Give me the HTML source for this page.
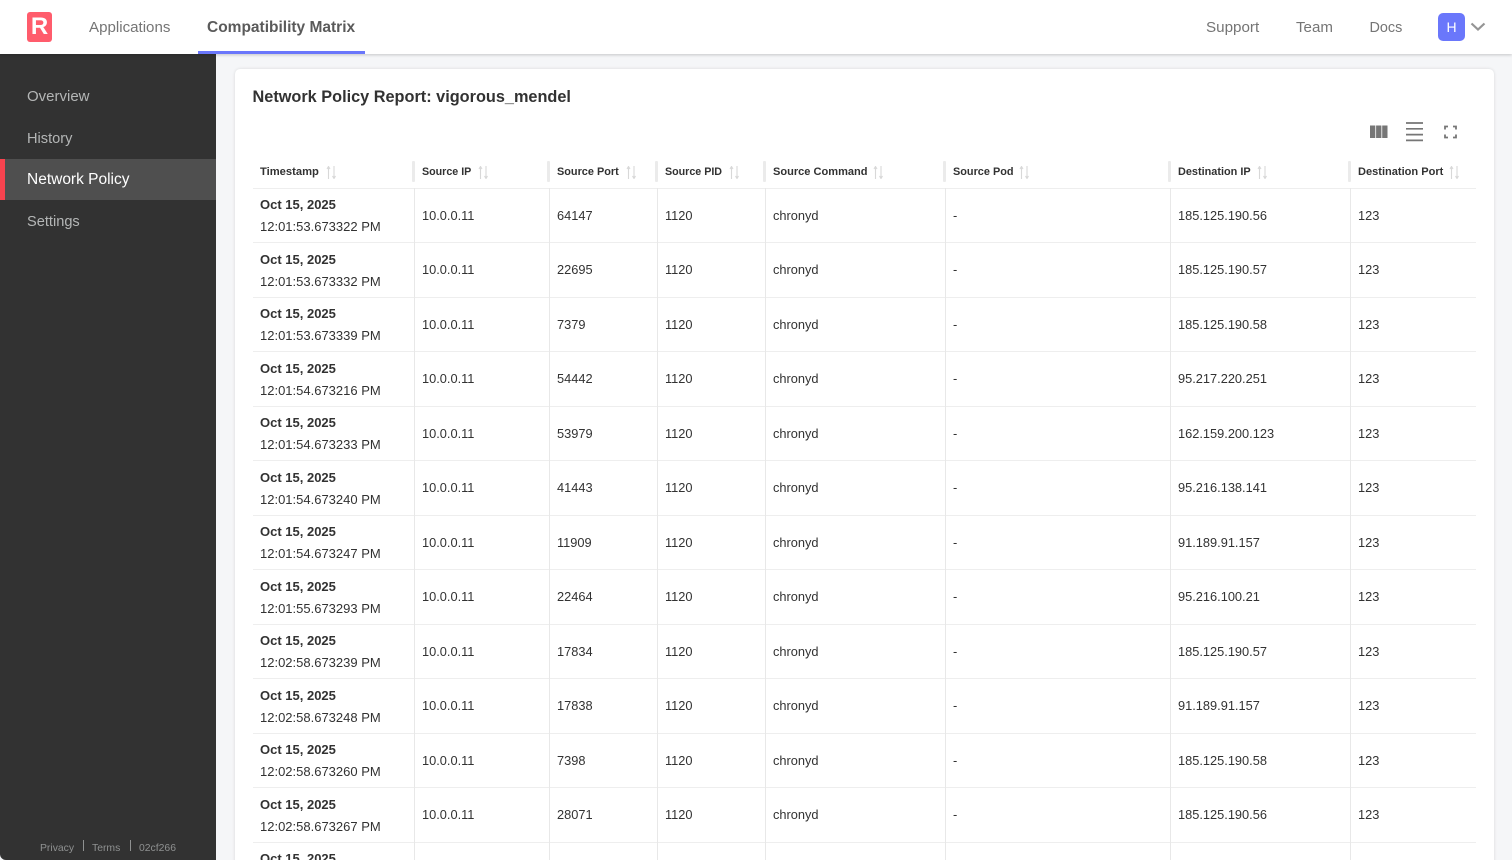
<!DOCTYPE html>
<html><head><meta charset="utf-8"><style>
*{box-sizing:border-box}
html,body{margin:0;padding:0;width:1512px;height:860px;overflow:hidden;background:#f5f6f8;font-family:"Liberation Sans",sans-serif;position:relative}
.a{position:absolute;white-space:nowrap}
.nav{font-size:15.1px;color:#757575;top:18px;line-height:20px}
.side{font-size:14.8px;color:#b4b6b6;left:27px;line-height:20px}
.foot{font-size:10.4px;color:#8f9191;top:842px;line-height:13px}
.h{font-size:11.05px;font-weight:bold;color:#323232;top:166px;line-height:13px}
.r{position:absolute;left:253px;width:1223px;height:54.5px;border-bottom:1px solid #eeeeee;font-size:12.8px;color:#323232}
.r span{position:absolute;top:19px;line-height:15px;white-space:nowrap}
.r b{position:absolute;left:7px;top:8.5px;line-height:16px;font-size:13px;color:#323232}
.r i{position:absolute;left:7px;top:30.5px;line-height:16px;font-size:13px;font-style:normal;color:#323232}
.c1{left:169px}.c2{left:304px}.c3{left:412px}.c4{left:520px}.c5{left:700px}.c6{left:925px}.c7{left:1105px}
.v{position:absolute;top:188px;height:672px;width:1.5px;background:#e8e8e8}
.g{position:absolute;top:160.5px;height:21.5px;width:3px;background:#ebebeb;border-radius:1px}
svg{position:absolute;display:block}
</style></head><body>
<div class="a" style="left:216px;top:54px;width:1296px;height:806px;background:#f5f6f8"></div>
<div class="a" style="left:235px;top:69px;width:1259px;height:800px;background:#fff;border-radius:5px;box-shadow:0 0 3px rgba(0,0,0,.12)"></div>

<div class="a" style="left:0;top:54px;width:216px;height:806px;background:#323232;border-bottom-left-radius:6px"></div>
<div class="a" style="left:0;top:158.5px;width:216px;height:41.5px;background:#4f4f4f"></div>
<div class="a" style="left:0;top:158.5px;width:5px;height:41.5px;background:#f7434f"></div>
<div class="a side" style="top:87px;font-size:15px">Overview</div>
<div class="a side" style="top:129px;font-size:14.6px">History</div>
<div class="a side" style="top:170px;color:#fff;font-size:15.5px">Network Policy</div>
<div class="a side" style="top:212px;font-size:14.6px">Settings</div>
<div class="a foot" style="left:40px">Privacy</div>
<div class="a" style="left:83px;top:840px;width:1px;height:11px;background:#8f9191"></div>
<div class="a foot" style="left:92px">Terms</div>
<div class="a" style="left:130px;top:840px;width:1px;height:11px;background:#8f9191"></div>
<div class="a foot" style="left:139px">02cf266</div>

<div class="a" style="left:0;top:0;width:1512px;height:54px;background:#fff;box-shadow:0 1px 3px rgba(0,0,0,.2)"></div>
<div class="a" style="left:27px;top:12px;width:25px;height:30px;background:#ff5c6c;border-radius:3px"></div>
<div class="a" style="left:27px;top:12px;width:25px;line-height:30px;text-align:center;color:#fff;font-size:24px;font-weight:bold">R</div>
<div class="a nav" style="left:89px">Applications</div>
<div class="a nav" style="left:207px;font-weight:bold;color:#5a5a5a;font-size:15.5px">Compatibility Matrix</div>
<div class="a" style="left:198px;top:51px;width:167px;height:3px;background:#6a77fb"></div>
<div class="a nav" style="left:1206px;font-size:15.2px">Support</div>
<div class="a nav" style="left:1296px">Team</div>
<div class="a nav" style="left:1369.5px;font-size:14.4px">Docs</div>
<div class="a" style="left:1438px;top:13px;width:27px;height:28px;background:#6a77fb;border-radius:5px;color:#fff;font-size:14px;line-height:28px;text-align:center">H</div>
<svg style="left:1470px;top:22px" width="16" height="10" viewBox="0 0 16 10"><path d="M1.5 1.5L8 7.5L14.5 1.5" fill="none" stroke="#959595" stroke-width="2.2"/></svg>

<div class="a" style="left:252.5px;top:87px;font-size:16.3px;line-height:20px;font-weight:bold;color:#323232">Network Policy Report: vigorous_mendel</div>

<svg style="left:1370px;top:125px" width="18" height="14" viewBox="0 0 18 14"><path d="M0 .5h5.300V13H0zM6.100 .5h5.300V13H6.100zM12.200 .5h5.300V13h-5.300z" fill="#767676"/></svg>
<svg style="left:1405px;top:122px" width="18" height="20" viewBox="0 0 18 20"><path d="M1 1h17M1 6.800h17M1 12.600h17M1 18.400h17" fill="none" stroke="#767676" stroke-width="1.700"/></svg>
<svg style="left:1444px;top:125px" width="13" height="14" viewBox="0 0 13 14"><path d="M1 4.500V1.500H4M9 1.500H12V4.500M12 9.500V12.500H9M4 12.500H1V9.500" fill="none" stroke="#767676" stroke-width="1.800"/></svg>

<div class="a h" style="left:260px;font-size:11.2px">Timestamp</div>
<div class="a h" style="left:422px;font-size:10.7px">Source IP</div>
<div class="a h" style="left:557px;font-size:10.9px">Source Port</div>
<div class="a h" style="left:665px;font-size:10.7px">Source PID</div>
<div class="a h" style="left:773px">Source Command</div>
<div class="a h" style="left:953px;font-size:10.9px">Source Pod</div>
<div class="a h" style="left:1178px;font-size:10.9px">Destination IP</div>
<div class="a h" style="left:1358px">Destination Port</div>

<svg style="left:326px;top:166px" width="11" height="13" viewBox="0 0 11 13"><path d="M2.500 13V1M1 3l1.500-2.500L4 3M8 0v12M6.500 10l1.500 2.500L9.500 10" fill="none" stroke="#d8d8d8" stroke-width="1.100"/></svg>
<svg style="left:478px;top:166px" width="11" height="13" viewBox="0 0 11 13"><path d="M2.500 13V1M1 3l1.500-2.500L4 3M8 0v12M6.500 10l1.500 2.500L9.500 10" fill="none" stroke="#d8d8d8" stroke-width="1.100"/></svg>
<svg style="left:626px;top:166px" width="11" height="13" viewBox="0 0 11 13"><path d="M2.500 13V1M1 3l1.500-2.500L4 3M8 0v12M6.500 10l1.500 2.500L9.500 10" fill="none" stroke="#d8d8d8" stroke-width="1.100"/></svg>
<svg style="left:729px;top:166px" width="11" height="13" viewBox="0 0 11 13"><path d="M2.500 13V1M1 3l1.500-2.500L4 3M8 0v12M6.500 10l1.500 2.500L9.500 10" fill="none" stroke="#d8d8d8" stroke-width="1.100"/></svg>
<svg style="left:873px;top:166px" width="11" height="13" viewBox="0 0 11 13"><path d="M2.500 13V1M1 3l1.500-2.500L4 3M8 0v12M6.500 10l1.500 2.500L9.500 10" fill="none" stroke="#d8d8d8" stroke-width="1.100"/></svg>
<svg style="left:1019px;top:166px" width="11" height="13" viewBox="0 0 11 13"><path d="M2.500 13V1M1 3l1.500-2.500L4 3M8 0v12M6.500 10l1.500 2.500L9.500 10" fill="none" stroke="#d8d8d8" stroke-width="1.100"/></svg>
<svg style="left:1257px;top:166px" width="11" height="13" viewBox="0 0 11 13"><path d="M2.500 13V1M1 3l1.500-2.500L4 3M8 0v12M6.500 10l1.500 2.500L9.500 10" fill="none" stroke="#d8d8d8" stroke-width="1.100"/></svg>
<svg style="left:1449px;top:166px" width="11" height="13" viewBox="0 0 11 13"><path d="M2.500 13V1M1 3l1.500-2.500L4 3M8 0v12M6.500 10l1.500 2.500L9.500 10" fill="none" stroke="#d8d8d8" stroke-width="1.100"/></svg>

<div class="a" style="left:253px;top:188px;width:1223px;height:1px;background:#eeeeee"></div>

<div class="r" style="top:188.5px"><b>Oct 15, 2025</b><i>12:01:53.673322 PM</i><span class="c1">10.0.0.11</span><span class="c2">64147</span><span class="c3">1120</span><span class="c4">chronyd</span><span class="c5">-</span><span class="c6">185.125.190.56</span><span class="c7">123</span></div>
<div class="r" style="top:243px"><b>Oct 15, 2025</b><i>12:01:53.673332 PM</i><span class="c1">10.0.0.11</span><span class="c2">22695</span><span class="c3">1120</span><span class="c4">chronyd</span><span class="c5">-</span><span class="c6">185.125.190.57</span><span class="c7">123</span></div>
<div class="r" style="top:297.500px"><b>Oct 15, 2025</b><i>12:01:53.673339 PM</i><span class="c1">10.0.0.11</span><span class="c2">7379</span><span class="c3">1120</span><span class="c4">chronyd</span><span class="c5">-</span><span class="c6">185.125.190.58</span><span class="c7">123</span></div>
<div class="r" style="top:352px"><b>Oct 15, 2025</b><i>12:01:54.673216 PM</i><span class="c1">10.0.0.11</span><span class="c2">54442</span><span class="c3">1120</span><span class="c4">chronyd</span><span class="c5">-</span><span class="c6">95.217.220.251</span><span class="c7">123</span></div>
<div class="r" style="top:406.500px"><b>Oct 15, 2025</b><i>12:01:54.673233 PM</i><span class="c1">10.0.0.11</span><span class="c2">53979</span><span class="c3">1120</span><span class="c4">chronyd</span><span class="c5">-</span><span class="c6">162.159.200.123</span><span class="c7">123</span></div>
<div class="r" style="top:461px"><b>Oct 15, 2025</b><i>12:01:54.673240 PM</i><span class="c1">10.0.0.11</span><span class="c2">41443</span><span class="c3">1120</span><span class="c4">chronyd</span><span class="c5">-</span><span class="c6">95.216.138.141</span><span class="c7">123</span></div>
<div class="r" style="top:515.500px"><b>Oct 15, 2025</b><i>12:01:54.673247 PM</i><span class="c1">10.0.0.11</span><span class="c2">11909</span><span class="c3">1120</span><span class="c4">chronyd</span><span class="c5">-</span><span class="c6">91.189.91.157</span><span class="c7">123</span></div>
<div class="r" style="top:570px"><b>Oct 15, 2025</b><i>12:01:55.673293 PM</i><span class="c1">10.0.0.11</span><span class="c2">22464</span><span class="c3">1120</span><span class="c4">chronyd</span><span class="c5">-</span><span class="c6">95.216.100.21</span><span class="c7">123</span></div>
<div class="r" style="top:624.500px"><b>Oct 15, 2025</b><i>12:02:58.673239 PM</i><span class="c1">10.0.0.11</span><span class="c2">17834</span><span class="c3">1120</span><span class="c4">chronyd</span><span class="c5">-</span><span class="c6">185.125.190.57</span><span class="c7">123</span></div>
<div class="r" style="top:679px"><b>Oct 15, 2025</b><i>12:02:58.673248 PM</i><span class="c1">10.0.0.11</span><span class="c2">17838</span><span class="c3">1120</span><span class="c4">chronyd</span><span class="c5">-</span><span class="c6">91.189.91.157</span><span class="c7">123</span></div>
<div class="r" style="top:733.500px"><b>Oct 15, 2025</b><i>12:02:58.673260 PM</i><span class="c1">10.0.0.11</span><span class="c2">7398</span><span class="c3">1120</span><span class="c4">chronyd</span><span class="c5">-</span><span class="c6">185.125.190.58</span><span class="c7">123</span></div>
<div class="r" style="top:788px"><b>Oct 15, 2025</b><i>12:02:58.673267 PM</i><span class="c1">10.0.0.11</span><span class="c2">28071</span><span class="c3">1120</span><span class="c4">chronyd</span><span class="c5">-</span><span class="c6">185.125.190.56</span><span class="c7">123</span></div>
<div class="r" style="top:842.500px;border-bottom:0"><b>Oct 15, 2025</b></div>

<div class="v" style="left:413.5px"></div><div class="v" style="left:548.5px"></div><div class="v" style="left:656.5px"></div><div class="v" style="left:764.5px"></div><div class="v" style="left:944.5px"></div><div class="v" style="left:1169.5px"></div><div class="v" style="left:1349.5px"></div>
<div class="g" style="left:412px"></div><div class="g" style="left:547px"></div><div class="g" style="left:655px"></div><div class="g" style="left:763px"></div><div class="g" style="left:943px"></div><div class="g" style="left:1168px"></div><div class="g" style="left:1348px"></div>
</body></html>
